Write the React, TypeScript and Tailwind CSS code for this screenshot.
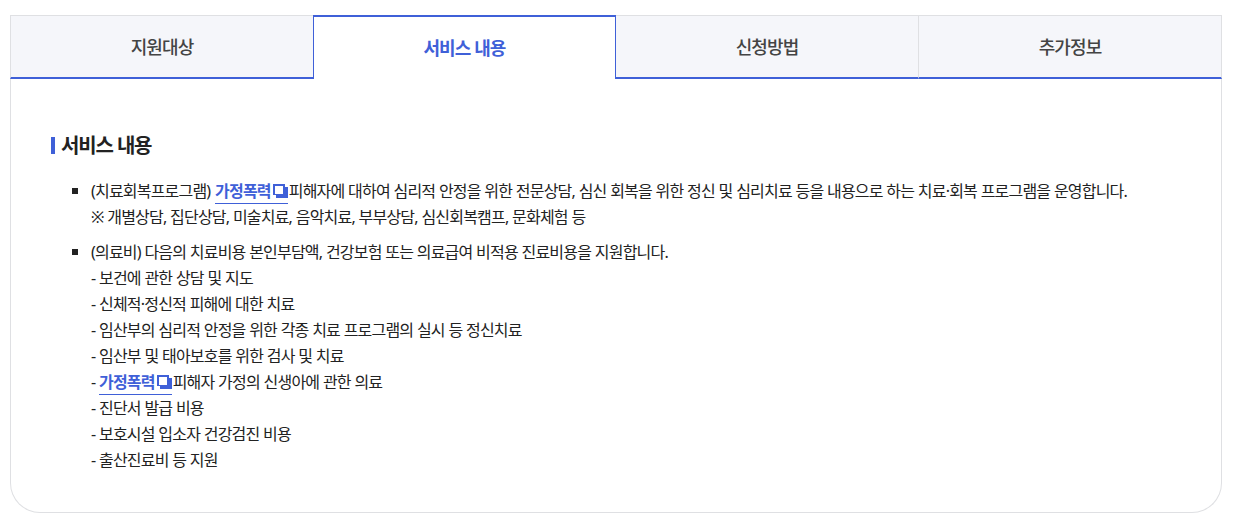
const TABS = ["지원대상", "서비스 내용", "신청방법", "추가정보"];

const TREATMENTS = [
  "- 보건에 관한 상담 및 지도",
  "- 신체적·정신적 피해에 대한 치료",
  "- 임산부의 심리적 안정을 위한 각종 치료 프로그램의 실시 등 정신치료",
  "- 임산부 및 태아보호를 위한 검사 및 치료",
];

const TREATMENTS_AFTER = ["- 진단서 발급 비용", "- 보호시설 입소자 건강검진 비용", "- 출산진료비 등 지원"];

function TermLink() {
  return (
    <span className="mr-[1px] inline-flex h-[25px] items-center gap-[2px] border-b border-[#3f60d8] font-bold text-[#3f60d8]">
      가정폭력
      <svg width="15" height="14" viewBox="0 0 15 14" aria-hidden>
        <path d="M0 0h12v3h3v11H3v-3H0z" fill="#3f60d8" />
        <path d="M2 2h8v8H2z" fill="#fff" />
      </svg>
    </span>
  );
}

export default function App() {
  return (
    <div className="bg-white pl-[10px] pr-[11px] pt-[15px] pb-[10px] font-['Noto_Sans','Noto_Sans_CJK_KR',sans-serif]">
      <div className="h-[498px] rounded-b-[30px] border border-t-0 border-[#dfe0e3]">
        <div className="mx-[-1px] grid h-[64px] grid-cols-[303px_303px_302px_304px]">
          {TABS.map((tab, i) =>
            i === 1 ? (
              <div
                key={tab}
                className="flex items-center justify-center border-x border-t-2 border-x-[#3f60d8] border-t-[#3f60d8] bg-white text-[18px] font-bold tracking-[-0.05em] text-[#3f60d8]"
              >
                {tab}
              </div>
            ) : (
              <div
                key={tab}
                className={`flex items-center justify-center border-t border-b-2 border-t-[#dfe0e3] border-b-[#3f60d8] bg-[#f5f6fa] pt-[1px] text-[18px] font-medium tracking-[-0.05em] text-[#444] ${
                  i === 3 ? "border-x border-x-[#dfe0e3]" : ""
                } ${i === 0 ? "border-l border-l-[#dfe0e3]" : ""}`}
              >
                {tab}
              </div>
            ),
          )}
        </div>

        <div className="pl-[40px] pt-[53px] text-[16px] leading-[26px] tracking-[-0.05em] text-[#222] [word-spacing:0.3px]">
          <h3 className="flex h-[28px] items-center gap-[6px] text-[20px] font-bold tracking-[-0.06em] text-[#222]">
            <span className="mt-[-1px] h-[17px] w-[4px] bg-[#3f60d8]" />
            서비스 내용
          </h3>

          <ul className="mt-[18px] flex flex-col gap-[9px]">
            <li className="relative pl-[40px]">
              <span className="absolute left-[21px] top-[10px] h-[6px] w-[6px] bg-[#222]" />
              <div>
                (치료회복프로그램){" "}
                <span className="pl-[1px]">
                  <TermLink />
                </span>
                피해자에 대하여 심리적 안정을 위한 전문상담, 심신 회복을 위한 정신 및 심리치료 등을 내용으로 하는 치료·회복 프로그램을 운영합니다.
              </div>
              <div>※ 개별상담, 집단상담, 미술치료, 음악치료, 부부상담, 심신회복캠프, 문화체험 등</div>
            </li>
            <li className="relative pl-[40px]">
              <span className="absolute left-[21px] top-[10px] h-[6px] w-[6px] bg-[#222]" />
              <div>(의료비) 다음의 치료비용 본인부담액, 건강보험 또는 의료급여 비적용 진료비용을 지원합니다.</div>
              {TREATMENTS.map((line) => (
                <div key={line}>{line}</div>
              ))}
              <div>
                - <TermLink />
                피해자 가정의 신생아에 관한 의료
              </div>
              {TREATMENTS_AFTER.map((line) => (
                <div key={line}>{line}</div>
              ))}
            </li>
          </ul>
        </div>
      </div>
    </div>
  );
}
